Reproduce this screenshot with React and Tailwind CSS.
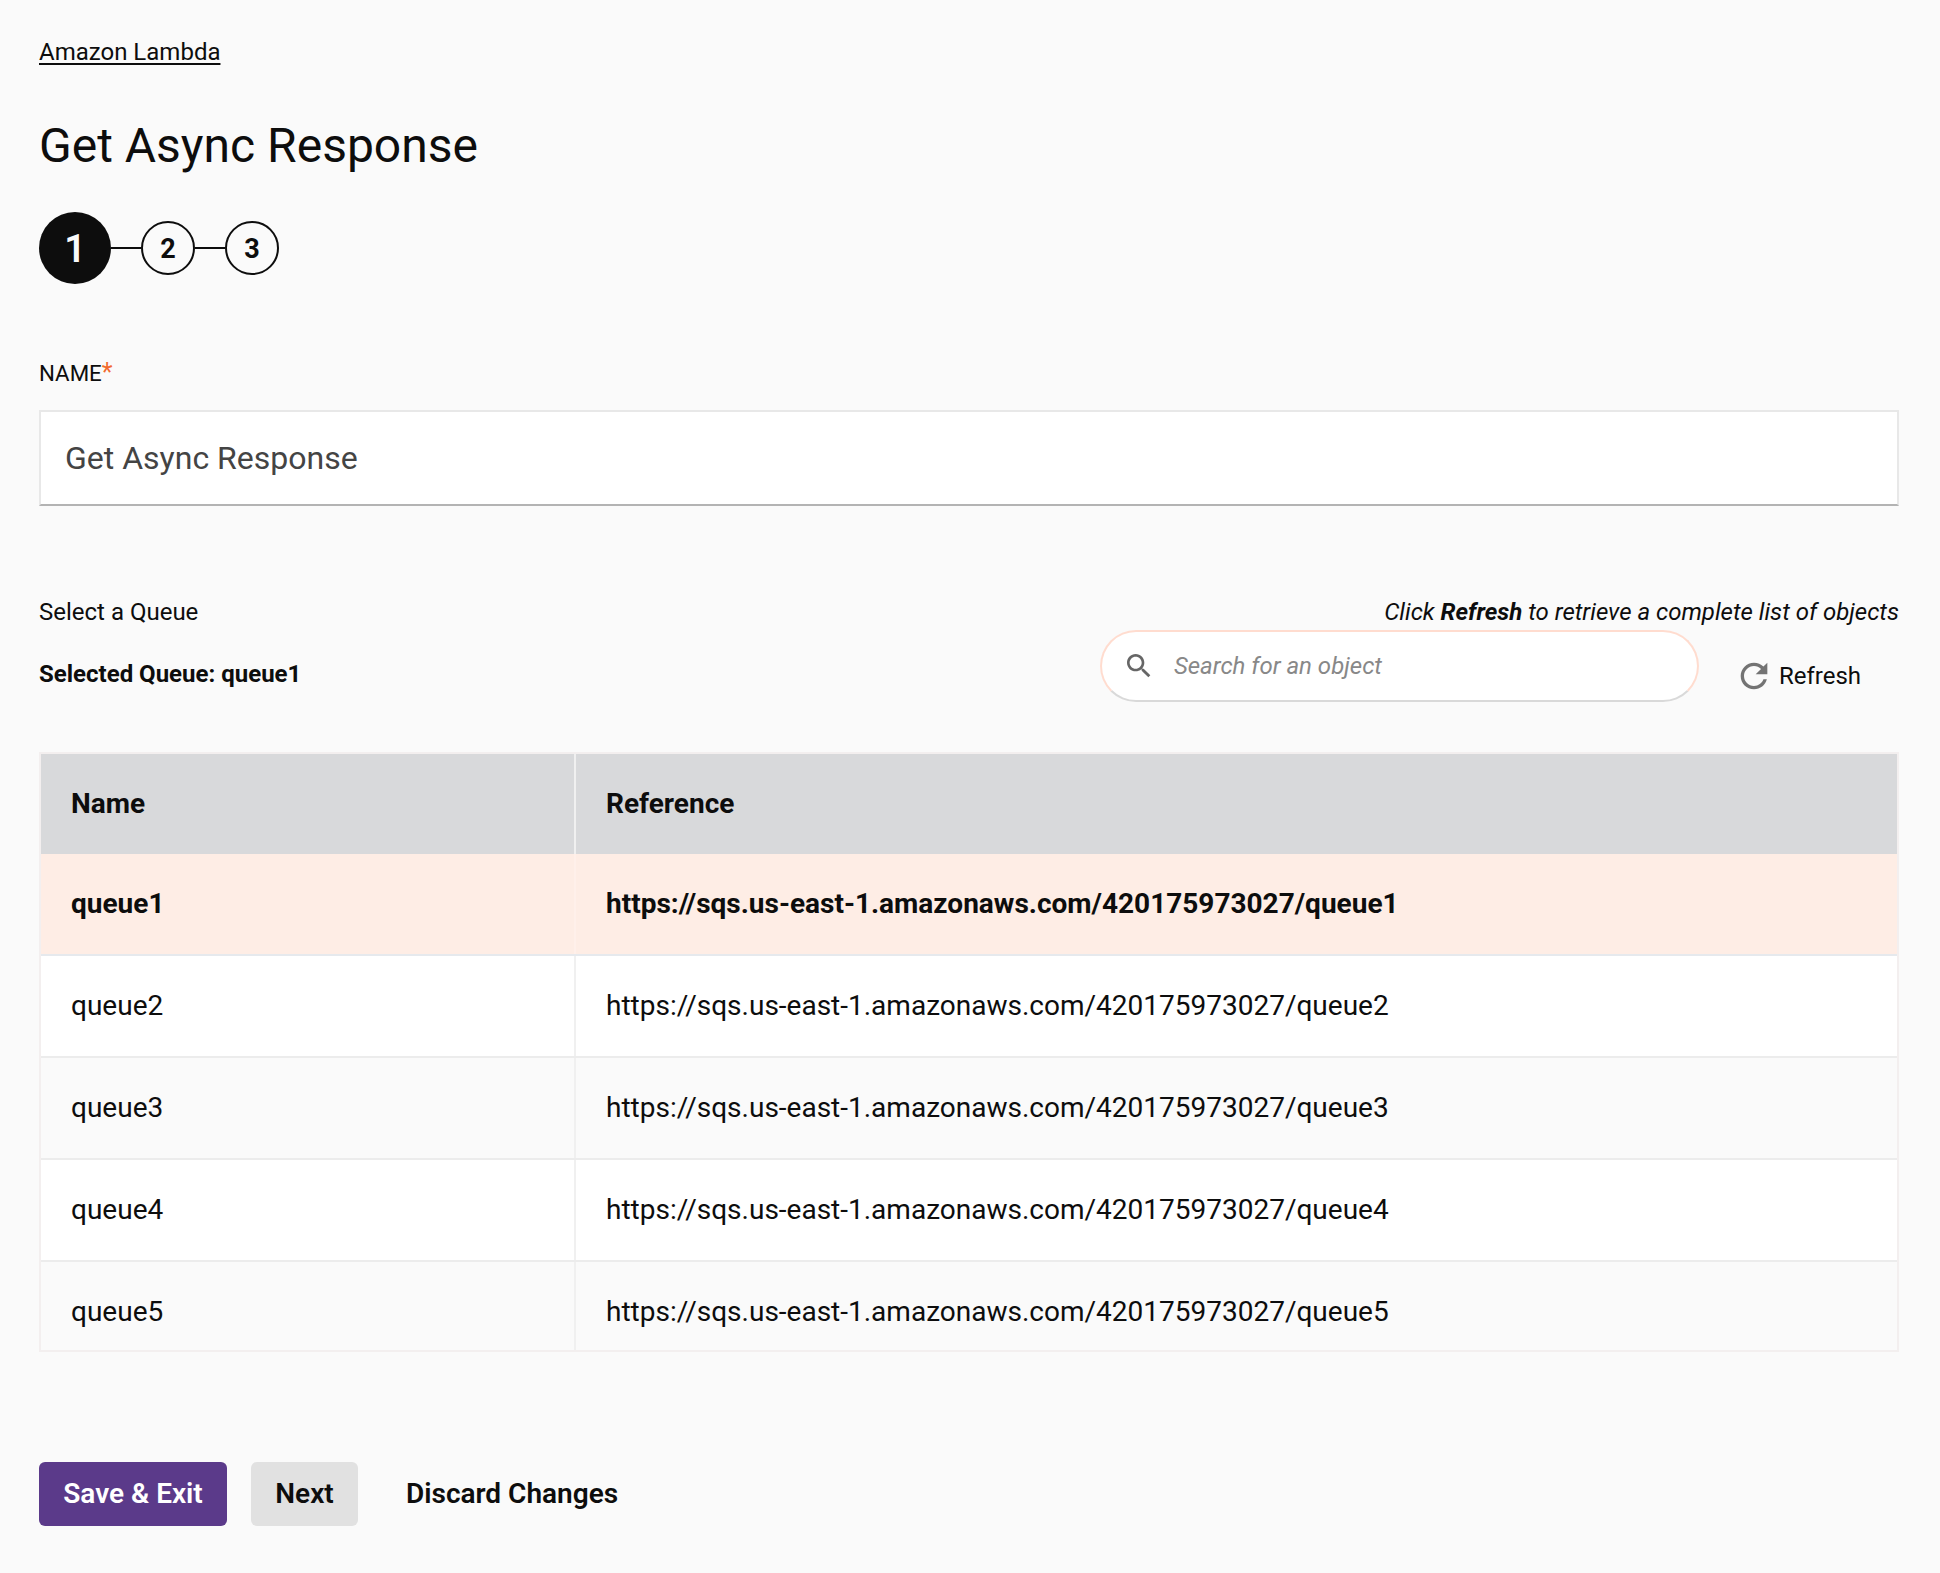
import { useState } from "react";

const queues = ["queue1", "queue2", "queue3", "queue4", "queue5"];
const baseUrl = "https://sqs.us-east-1.amazonaws.com/420175973027/";

const Step = ({ n, active }) => (
  <div
    className={
      active
        ? "w-[72px] h-[72px] pt-[3px] rounded-full bg-[#0d0d0d] text-[#fafafa] text-[38px] font-semibold flex items-center justify-center"
        : "w-[54px] h-[54px] pt-[3px] rounded-full border-2 border-[#0d0d0d] text-[#0d0d0d] text-[27px] font-bold flex items-center justify-center"
    }
  >
    {n}
  </div>
);

const App = () => {
  const [name] = useState("Get Async Response");

  return (
    <div className="w-full min-h-[1573px] bg-[#fafafa] pl-[39px] pr-[41px] pt-[37px] text-[#0d0d0d] font-['Roboto',sans-serif]">
      <a href="#" className="block w-fit text-[24px] leading-[30px] underline decoration-2 underline-offset-[3px]">
        Amazon Lambda
      </a>

      <h1 className="mt-[51px] text-[48px] leading-[56px] font-normal">Get Async Response</h1>

      {/* Steps */}
      <div className="mt-[38px] flex items-center">
        <Step n="1" active />
        <div className="w-[30px] h-[2px] bg-[#0d0d0d]" />
        <Step n="2" />
        <div className="w-[30px] h-[2px] bg-[#0d0d0d]" />
        <Step n="3" />
      </div>

      <label className="block mt-[75px] text-[22.3px] leading-[28px]">
        NAME<span className="text-[25px] leading-none text-[#f26a2e]">*</span>
      </label>
      <input
        readOnly
        value={name}
        className="block mt-[23px] w-full h-[96px] px-[24px] bg-white border-2 border-[#e8e8e8] border-b-[#b3b3b3] text-[32px] text-[#444] outline-none"
      />

      {/* Queue picker */}
      <div className="mt-[92px] flex justify-between text-[24px] leading-[28px]">
        <span>Select a Queue</span>
        <span className="italic">
          Click <b>Refresh</b> to retrieve a complete list of objects
        </span>
      </div>
      <div className="mt-[4px] flex items-start">
        <span className="mt-[30px] text-[24px] leading-[28px] font-bold">Selected Queue: queue1</span>
        <div className="ml-auto w-[599px] h-[72px] flex items-center pl-[21px] pr-6 bg-white rounded-full border-2 border-[#ffdccf] border-b-[#d9d9d9]">
          <svg viewBox="0 0 24 24" className="w-[32px] h-[32px] fill-[#666] shrink-0">
            <path d="M15.5 14h-.79l-.28-.27C15.41 12.59 16 11.11 16 9.5 16 5.91 13.09 3 9.5 3S3 5.91 3 9.5 5.91 16 9.5 16c1.61 0 3.09-.59 4.23-1.57l.27.28v.79l5 4.99L20.49 19l-4.99-5zm-6 0C7.01 14 5 11.99 5 9.5S7.01 5 9.5 5 14 7.01 14 9.5 11.99 14 9.5 14z" />
          </svg>
          <input
            placeholder="Search for an object"
            className="ml-[19px] flex-1 bg-transparent text-[24px] italic outline-none placeholder:text-[#888]"
          />
        </div>
        <button className="ml-[35px] mr-[38px] mt-[26px] flex items-center gap-[5px] text-[24px] leading-[40px]">
          <svg viewBox="0 0 24 24" className="w-[40px] h-[40px] fill-[#737373]">
            <path d="M17.65 6.35C16.2 4.9 14.21 4 12 4c-4.42 0-7.99 3.58-7.99 8s3.57 8 7.99 8c3.73 0 6.84-2.55 7.73-6h-2.08c-.82 2.33-3.04 4-5.65 4-3.31 0-6-2.69-6-6s2.69-6 6-6c1.66 0 3.14.69 4.22 1.78L13 11h7V4l-2.35 2.35z" />
          </svg>
          Refresh
        </button>
      </div>

      {/* Table */}
      <div className="mt-[50px] border-2 border-[#f3efef] text-[28px]">
        <div className="grid grid-cols-[535px_1fr] h-[100px] bg-[#d8d9db] font-bold items-center">
          <div className="h-full flex items-center pl-[30px] border-r-2 border-[#f0f0f0]">Name</div>
          <div className="pl-[30px]">Reference</div>
        </div>
        {queues.map((q, i) => (
          <div
            key={q}
            className={
              "grid grid-cols-[535px_1fr] border-b-2 last:border-b-0 " +
              (i === 0
                ? "h-[102px] bg-[#feede5] font-bold border-[#e6e9ed]"
                : i === 4
                  ? "h-[88px] bg-[#fafafa] border-[#ececec]"
                  : i % 2 === 1
                    ? "h-[102px] bg-white border-[#ececec]"
                    : "h-[102px] bg-[#fafafa] border-[#ececec]")
            }
          >
            <div
              className={
                "flex items-center pl-[30px] border-r-2 " +
                (i === 0 ? "border-[#fff0ea]" : "border-[#f0f0f0]") +
                (i === 4 ? " pt-[12px]" : "")
              }
            >
              {q}
            </div>
            <div className={"flex items-center pl-[30px]" + (i === 4 ? " pt-[12px]" : "")}>{baseUrl + q}</div>
          </div>
        ))}
      </div>

      {/* Footer buttons */}
      <div className="mt-[110px] flex items-center text-[28px] font-semibold">
        <button className="w-[188px] h-[64px] rounded-[6px] bg-[#5b3a8a] text-white">Save &amp; Exit</button>
        <button className="ml-[24px] w-[107px] h-[64px] rounded-[6px] bg-[#e1e1e1]">Next</button>
        <button className="ml-[48px]">Discard Changes</button>
      </div>
    </div>
  );
};

export default App;
